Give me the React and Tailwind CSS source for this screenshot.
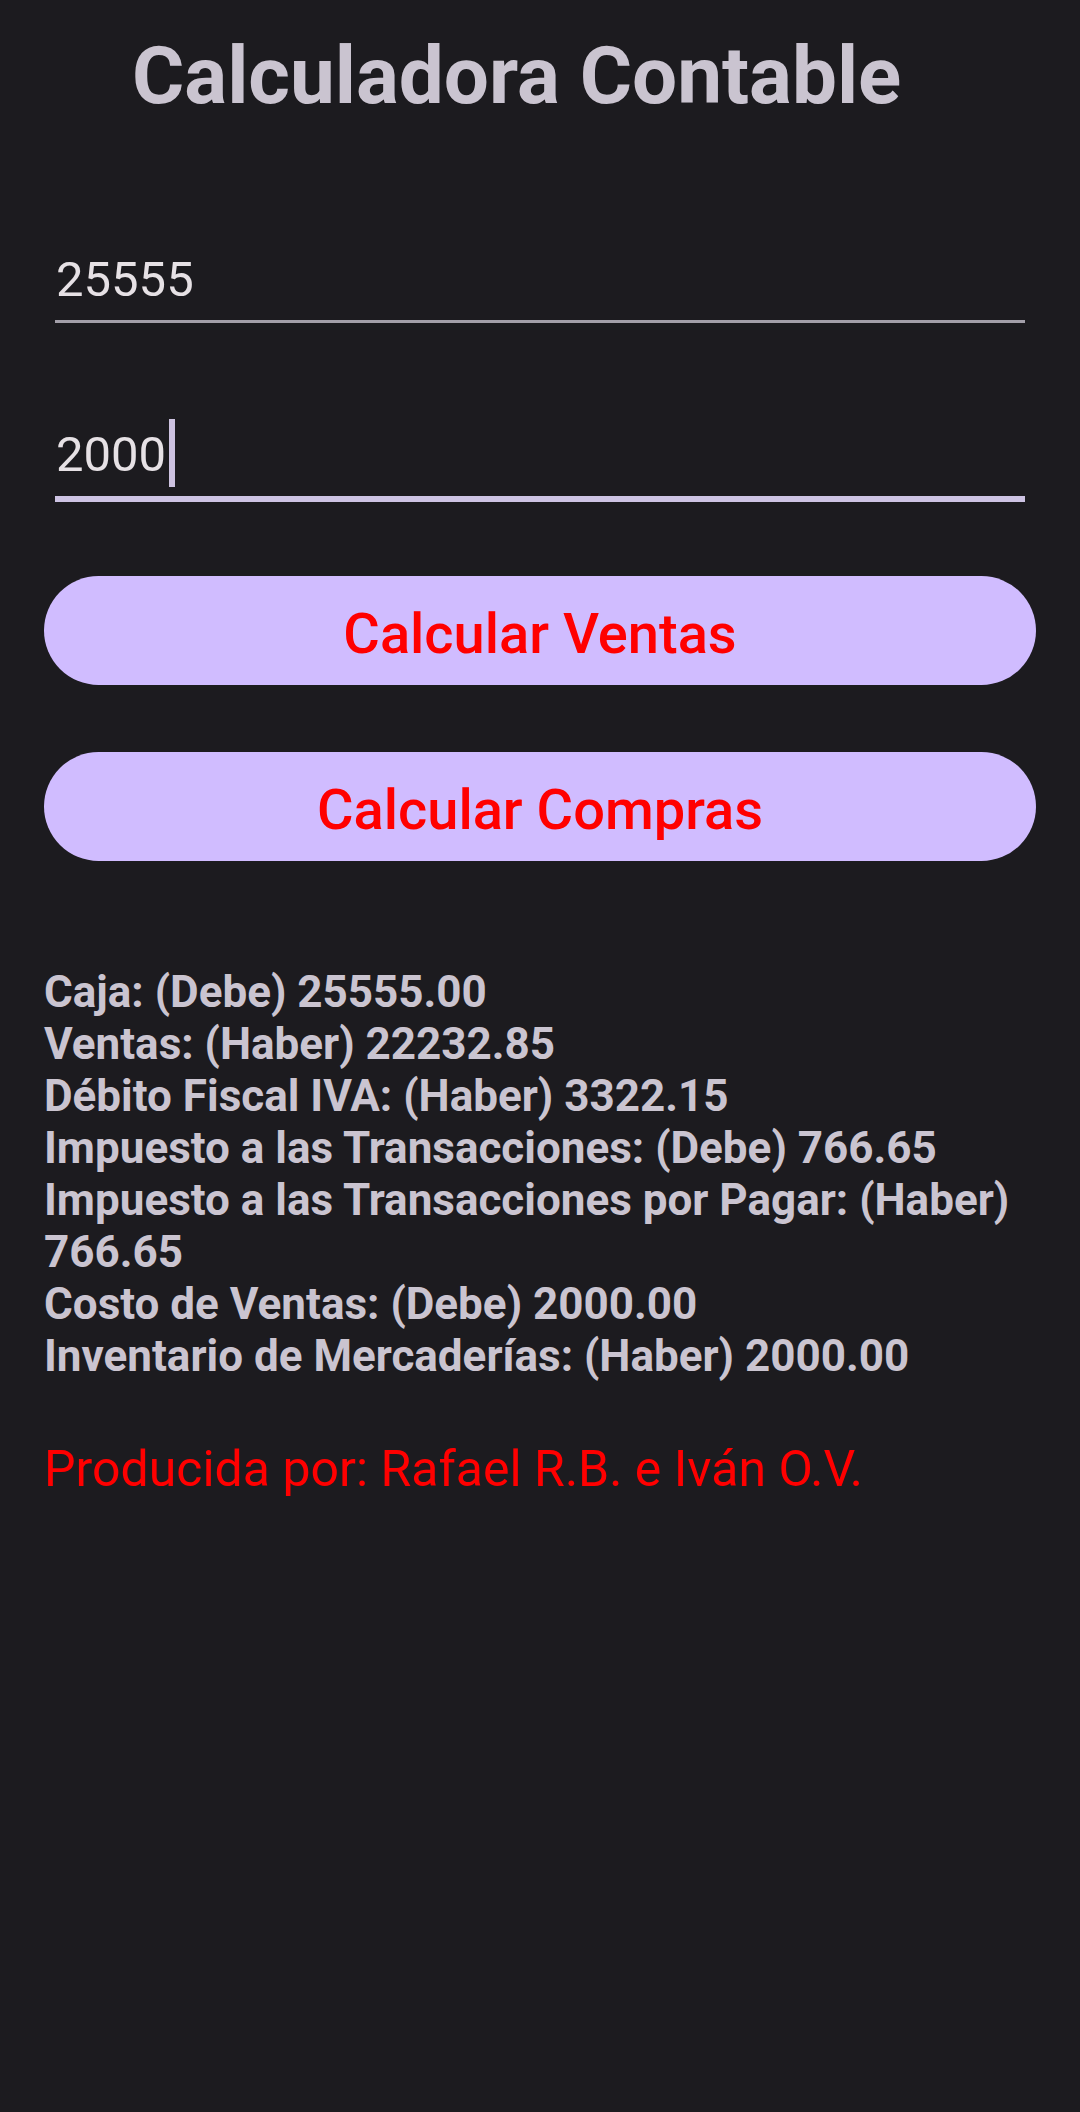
export default function App() {
  const lines = [
    "Caja: (Debe) 25555.00",
    "Ventas: (Haber) 22232.85",
    "Débito Fiscal IVA: (Haber) 3322.15",
    "Impuesto a las Transacciones: (Debe) 766.65",
    "Impuesto a las Transacciones por Pagar: (Haber) 766.65",
    "Costo de Ventas: (Debe) 2000.00",
    "Inventario de Mercaderías: (Haber) 2000.00",
  ];
  return (
    <div
      className="w-[1080px] min-h-[2112px] bg-[#1c1b1f] flex flex-col"
      style={{ fontFamily: "Roboto, 'Noto Sans', sans-serif" }}
    >
      <h1 className="pt-[29px] pl-[132px] text-[80px] leading-[94px] font-bold text-[#cac4d0]">
        Calculadora Contable
      </h1>

      <div className="mt-[127px] mx-[55px] border-b-[3px] border-[#a39fa9] pb-[10px]">
        <div className="text-[49px] leading-[60px] text-[#e6e1e5] pl-[1px]">25555</div>
      </div>

      <div className="mt-[102px] mx-[55px] border-b-[6px] border-[#cdc3e3] pb-[11px]">
        <div className="h-[60px] text-[49px] leading-[60px] text-[#e6e1e5] pl-[1px] flex items-center">
          <span>2000</span>
          <span className="inline-block w-[6px] h-[68px] bg-[#cdc2e0] ml-[3px] -mt-[6px] -mb-[2px] shrink-0"></span>
        </div>
      </div>

      <div className="mt-[74px] mx-[44px] flex flex-col gap-[67px]">
        <button className="h-[109px] rounded-full bg-[#d0bcff] text-[#ff0000] text-[56px] font-medium flex items-center justify-center pt-[6px]">
          Calcular Ventas
        </button>
        <button className="h-[109px] rounded-full bg-[#d0bcff] text-[#ff0000] text-[56px] font-medium flex items-center justify-center pt-[6px]">
          Calcular Compras
        </button>
      </div>

      <div className="mt-[105px] px-[44px] text-[44px] leading-[52px] font-bold text-[#cac4d0]">
        {lines.map((l) => (
          <div key={l}>{l}</div>
        ))}
      </div>

      <div className="mt-[57px] px-[44px] text-[50px] leading-[60px] text-[#ff0000]">
        Producida por: Rafael R.B. e Iván O.V.
      </div>
    </div>
  );
}
